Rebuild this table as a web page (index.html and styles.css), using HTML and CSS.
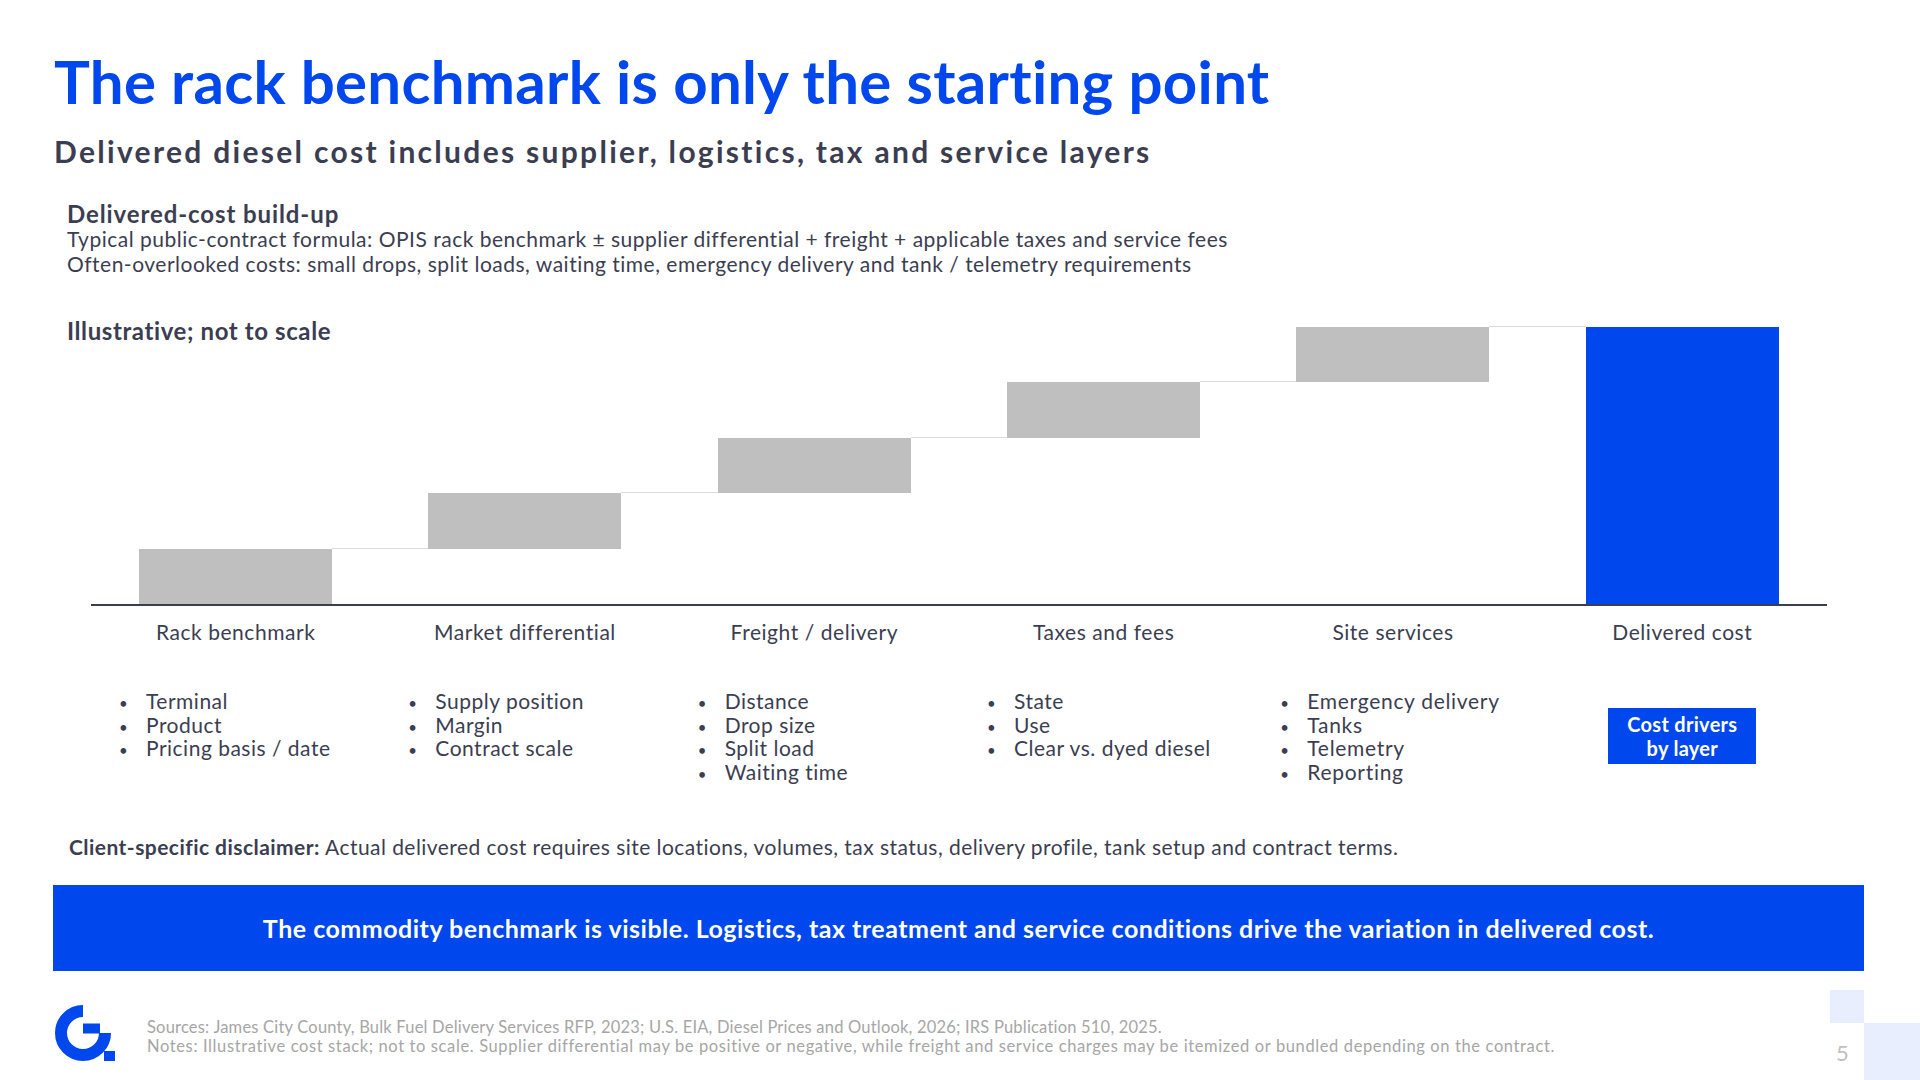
FILE: index.html
```html
<!DOCTYPE html>
<html lang="en">
<head>
<meta charset="utf-8">
<title>The rack benchmark is only the starting point</title>
<link rel="stylesheet" href="styles.css">
</head>
<body>
<div class="slide">
  <header class="head">
    <h1 class="title">The rack benchmark is only the starting point</h1>
    <h2 class="subtitle">Delivered diesel cost includes supplier, logistics, tax and service layers</h2>
  </header>

  <section class="buildup">
    <h3 class="buildup-title">Delivered-cost build-up</h3>
    <p class="buildup-line">Typical public-contract formula: OPIS rack benchmark ± supplier differential + freight + applicable taxes and service fees</p>
    <p class="buildup-line">Often-overlooked costs: small drops, split loads, waiting time, emergency delivery and tank / telemetry requirements</p>
  </section>

  <section class="chart">
    <div class="chart-top">
      <div class="chart-note">Illustrative; not to scale</div>
      <div class="plot">
        <div class="col"><div class="bar link" style="--base:0;--size:1"></div></div>
        <div class="col"><div class="bar link" style="--base:1;--size:1"></div></div>
        <div class="col"><div class="bar link" style="--base:2;--size:1"></div></div>
        <div class="col"><div class="bar link" style="--base:3;--size:1"></div></div>
        <div class="col"><div class="bar link" style="--base:4;--size:1"></div></div>
        <div class="col"><div class="bar total" style="--base:0;--size:5"></div></div>
      </div>
    </div>
    <div class="labels">
      <div class="label">Rack benchmark</div>
      <div class="label">Market differential</div>
      <div class="label">Freight / delivery</div>
      <div class="label">Taxes and fees</div>
      <div class="label">Site services</div>
      <div class="label">Delivered cost</div>
    </div>
    <div class="drivers">
      <ul class="list">
        <li>Terminal</li>
        <li>Product</li>
        <li>Pricing basis / date</li>
      </ul>
      <ul class="list">
        <li>Supply position</li>
        <li>Margin</li>
        <li>Contract scale</li>
      </ul>
      <ul class="list">
        <li>Distance</li>
        <li>Drop size</li>
        <li>Split load</li>
        <li>Waiting time</li>
      </ul>
      <ul class="list">
        <li>State</li>
        <li>Use</li>
        <li>Clear vs. dyed diesel</li>
      </ul>
      <ul class="list list-wide">
        <li>Emergency delivery</li>
        <li>Tanks</li>
        <li>Telemetry</li>
        <li>Reporting</li>
      </ul>
      <div class="tag">Cost drivers<br>by layer</div>
    </div>
  </section>

  <p class="disclaimer"><strong>Client-specific disclaimer:</strong> Actual delivered cost requires site locations, volumes, tax status, delivery profile, tank setup and contract terms.</p>

  <div class="banner">The commodity benchmark is visible. Logistics, tax treatment and service conditions drive the variation in delivered cost.</div>

  <footer class="footer">
    <svg class="logo" width="60" height="56" viewBox="0 0 60 56" aria-label="logo">
      <path d="M28 6 A22 22 0 1 0 50 28" fill="none" stroke="#0047ee" stroke-width="12"/>
      <rect x="28" y="18.5" width="17" height="10" fill="#0047ee"/>
      <rect x="49" y="46" width="11" height="10" fill="#0047ee"/>
    </svg>
    <div class="notes">
      <div class="notes-src">Sources: James City County, Bulk Fuel Delivery Services RFP, 2023; U.S. EIA, Diesel Prices and Outlook, 2026; IRS Publication 510, 2025.</div>
      <div class="notes-note">Notes: Illustrative cost stack; not to scale. Supplier differential may be positive or negative, while freight and service charges may be itemized or bundled depending on the contract.</div>
    </div>
  </footer>

  <div class="corner-sq small"></div>
  <div class="corner-sq large"></div>
  <div class="page-no">5</div>
</div>
</body>
</html>
```

FILE: styles.css
```css
* { box-sizing: border-box; }
html, body { margin: 0; padding: 0; }
body {
  width: 1920px;
  height: 1080px;
  overflow: hidden;
  background: #ffffff;
  font-family: "Lato", "Liberation Sans", sans-serif;
  color: #3b3e51;
}
.slide {
  position: relative;
  width: 1920px;
  height: 1080px;
  padding: 46px 56px 0 54px;
}
.title {
  margin: 0;
  font-size: 60px;
  line-height: 70px;
  letter-spacing: 0.3px;
  font-weight: 700;
  color: #0047ee;
}
.subtitle {
  margin: 19px 0 0;
  font-size: 30px;
  line-height: 32px;
  letter-spacing: 2.3px;
  font-weight: 700;
  color: #3b3e51;
}
.buildup { margin: 34px 0 0 13px; }
.buildup-title {
  margin: 0;
  font-size: 24px;
  line-height: 26px;
  letter-spacing: 0.9px;
  font-weight: 700;
}
.buildup-line {
  margin: 0;
  font-size: 21px;
  line-height: 24.5px;
  letter-spacing: 0.5px;
}
.chart-top {
  display: grid;
  margin-top: 42px;
}
.chart-note, .plot { grid-area: 1 / 1; }
.chart-note {
  align-self: start;
  margin-left: 13px;
  font-size: 24px;
  line-height: 26px;
  letter-spacing: 0.6px;
  font-weight: 700;
}
.plot {
  margin: 9px 0 0 37px;
  width: 1736px;
  height: 279px;
  display: grid;
  grid-template-columns: repeat(6, 1fr);
  border-bottom: 2px solid #3b3e51;
}
.col {
  display: flex;
  flex-direction: column;
  align-items: center;
  justify-content: flex-end;
}
.bar {
  position: relative;
  width: 193px;
  height: calc(var(--size) * 55.4px);
  margin-bottom: calc(var(--base) * 55.4px);
  background: #bfbfbf;
}
.bar.link::after {
  content: "";
  position: absolute;
  left: 100%;
  top: -1px;
  width: 96.3px;
  height: 1px;
  background: #dcdcdc;
}
.bar.total { background: #0047ee; }
.labels {
  margin: 14px 0 0 37px;
  width: 1736px;
  display: grid;
  grid-template-columns: repeat(6, 1fr);
}
.label {
  text-align: center;
  font-size: 21px;
  line-height: 24px;
  letter-spacing: 0.55px;
}
.drivers {
  margin: 45px 0 0 37px;
  width: 1736px;
  display: grid;
  grid-template-columns: repeat(6, 1fr);
  align-items: center;
}
.list {
  align-self: start;
  list-style: none;
  margin: 0;
  padding: 0 0 0 28px;
  font-size: 21px;
  line-height: 23.7px;
  letter-spacing: 0.5px;
}
.list-wide { padding-left: 32px; letter-spacing: 0.7px; }
.list li {
  display: flex;
  align-items: baseline;
  height: 23.7px;
}
.list li::before {
  content: "•";
  flex: none;
  width: 27px;
  font-size: 15px;
  line-height: 1;
}
.tag {
  justify-self: center;
  width: 148px;
  padding: 4px 0;
  background: #0047ee;
  color: #ffffff;
  font-weight: 700;
  font-size: 20px;
  line-height: 24px;
  letter-spacing: 0.3px;
  text-align: center;
}
.disclaimer {
  margin: 51px 0 0 15px;
  font-size: 21px;
  line-height: 24px;
  letter-spacing: 0.45px;
}
.disclaimer strong { font-weight: 700; }
.banner {
  margin: 26px 0 0 -1px;
  height: 86px;
  background: #0047ee;
  color: #ffffff;
  display: flex;
  align-items: center;
  justify-content: center;
  font-size: 25px;
  letter-spacing: 0.5px;
  font-weight: 700;
}
.footer {
  margin: 34px 0 0 1px;
  display: flex;
  align-items: center;
  gap: 32px;
}
.logo { flex: none; display: block; }
.notes {
  padding-top: 8px;
  font-size: 16.5px;
  line-height: 19px;
  color: #a6a6a6;
}
.notes-src { letter-spacing: 0.2px; }
.notes-note { letter-spacing: 0.62px; }
.corner-sq {
  position: absolute;
  background: #e8eefe;
}
.corner-sq.small { left: 1830px; top: 990px; width: 34px; height: 33px; }
.corner-sq.large { left: 1864px; top: 1023px; width: 56px; height: 57px; }
.page-no {
  position: absolute;
  left: 1836px;
  top: 1040px;
  font-size: 22px;
  line-height: 26px;
  color: #bfbfbf;
}
```
